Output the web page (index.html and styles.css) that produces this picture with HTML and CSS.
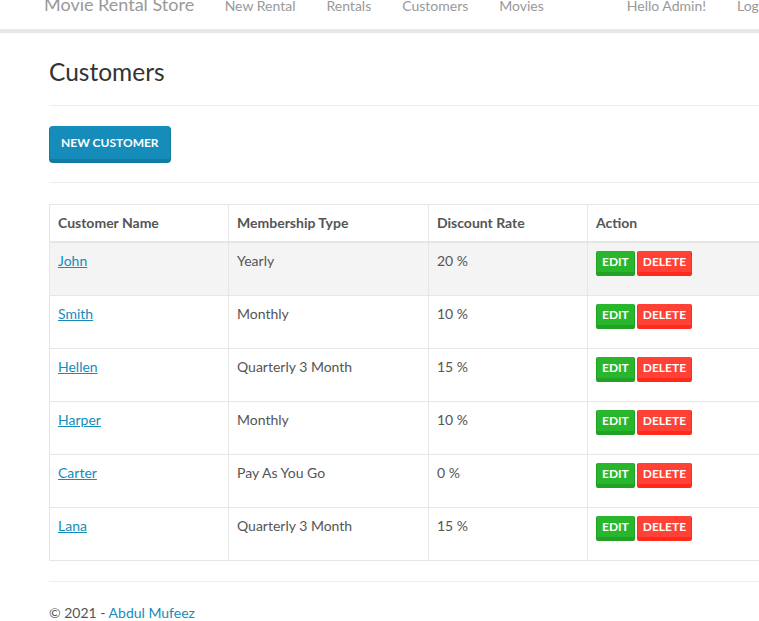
FILE: index.html
```html
<!DOCTYPE html>
<html>
<head>
<meta charset="utf-8">
<title>Customers</title>
<link rel="stylesheet" href="styles.css">
</head>
<body>
<nav class="navbar">
  <div class="nav-inner">
    <span class="brand">Movie Rental Store</span>
    <ul class="nav">
      <li><a href="#">New Rental</a></li>
      <li><a href="#">Rentals</a></li>
      <li><a href="#">Customers</a></li>
      <li><a href="#">Movies</a></li>
    </ul>
    <ul class="nav nav-right">
      <li><a href="#">Hello Admin!</a></li>
      <li><a href="#">Log out</a></li>
    </ul>
  </div>
</nav>
<main class="content">
  <h2 class="title">Customers</h2>
  <hr class="rule">
  <a href="#" class="btn btn-primary">New Customer</a>
  <hr class="rule rule-after-btn">
  <table class="tbl">
    <colgroup>
      <col class="c1"><col class="c2"><col class="c3"><col class="c4">
    </colgroup>
    <thead>
      <tr><th>Customer Name</th><th>Membership Type</th><th>Discount Rate</th><th>Action</th></tr>
    </thead>
    <tbody>
      <tr class="hover"><td><a href="#">John</a></td><td>Yearly</td><td>20 %</td><td><a href="#" class="btn btn-xs btn-success">Edit</a><a href="#" class="btn btn-xs btn-danger">Delete</a></td></tr>
      <tr><td><a href="#">Smith</a></td><td>Monthly</td><td>10 %</td><td><a href="#" class="btn btn-xs btn-success">Edit</a><a href="#" class="btn btn-xs btn-danger">Delete</a></td></tr>
      <tr><td><a href="#">Hellen</a></td><td>Quarterly 3 Month</td><td>15 %</td><td><a href="#" class="btn btn-xs btn-success">Edit</a><a href="#" class="btn btn-xs btn-danger">Delete</a></td></tr>
      <tr><td><a href="#">Harper</a></td><td>Monthly</td><td>10 %</td><td><a href="#" class="btn btn-xs btn-success">Edit</a><a href="#" class="btn btn-xs btn-danger">Delete</a></td></tr>
      <tr><td><a href="#">Carter</a></td><td>Pay As You Go</td><td>0 %</td><td><a href="#" class="btn btn-xs btn-success">Edit</a><a href="#" class="btn btn-xs btn-danger">Delete</a></td></tr>
      <tr><td><a href="#">Lana</a></td><td>Quarterly 3 Month</td><td>15 %</td><td><a href="#" class="btn btn-xs btn-success">Edit</a><a href="#" class="btn btn-xs btn-danger">Delete</a></td></tr>
    </tbody>
  </table>
  <hr class="rule rule-footer">
  <footer class="footer">© 2021 - <a href="#" class="footer-link">Abdul Mufeez</a></footer>
</main>
</body>
</html>
```

FILE: styles.css
```css
* { box-sizing: border-box; }
html, body {
  margin: 0;
  padding: 0;
  overflow: hidden;
}
body {
  font-family: Lato, "Open Sans", "Liberation Sans", sans-serif;
  font-size: 14px;
  line-height: 20px;
  color: #555;
  background: #fff;
  width: 759px;
}
a { color: #158cba; }

.navbar {
  margin-top: -21px;
  height: 54px;
  border-bottom: 4px solid #e7e7e7;
  background: #fff;
}
.nav-inner {
  display: flex;
  align-items: flex-start;
  padding-left: 29px;
  white-space: nowrap;
}
.brand {
  display: block;
  padding: 15px 15px;
  font-size: 18px;
  line-height: 20px;
  color: #999;
}
.nav {
  display: flex;
  list-style: none;
  margin: 0;
  padding: 0;
}
.nav a {
  display: block;
  padding: 17px 15.5px 13px 15.5px;
  line-height: 20px;
  color: #999;
  text-decoration: none;
}
.nav-right { margin-left: 52px; }

.content {
  margin-left: 49px;
  width: 710px;
  padding-top: 26px;
}
.title {
  margin: 0;
  font-size: 24.5px;
  font-weight: 400;
  line-height: 26px;
  color: #333;
}
.rule {
  border: 0;
  border-top: 1px solid #eee;
  margin: 20px 0 20px 0;
  width: 710px;
}
.rule-after-btn { margin: 19px 0 21px 0; }
.rule-footer { margin: 20px 0 0 0; }

.btn {
  display: inline-block;
  font-size: 12px;
  font-weight: 700;
  text-transform: uppercase;
  text-decoration: none;
  color: #fff;
  border-style: solid;
  border-width: 0 1px 4px 1px;
  border-radius: 4px;
  vertical-align: top;
}
.btn-primary {
  padding: 8px 11px;
  line-height: 17px;
  background: #158cba;
  border-color: #127ba3;
}
.btn-xs {
  padding: 2px 5px 1px 5px;
  line-height: 18px;
  border-radius: 2px;
  margin-right: 2px;
}
.btn-success {
  background: #28b62c;
  border-color: #23a127;
}
.btn-danger {
  background: #ff4136;
  border-color: #ff291c;
}

.tbl {
  border-collapse: collapse;
  table-layout: fixed;
  width: 710px;
  margin: 0;
}
.tbl .c1 { width: 179px; }
.tbl .c2 { width: 200px; }
.tbl .c3 { width: 159px; }
.tbl .c4 { width: 172px; }
.tbl th, .tbl td {
  border: 1px solid #e6e6e6;
  padding: 8px 8px;
  text-align: left;
  vertical-align: top;
}
.tbl th {
  font-weight: 700;
  color: #555;
  border-bottom-width: 2px;
}
.tbl td { height: 53px; }
.tbl .hover td { background: #f4f4f4; }

.footer {
  padding-top: 21px;
  line-height: 20px;
}
.footer-link { text-decoration: none; }
```
